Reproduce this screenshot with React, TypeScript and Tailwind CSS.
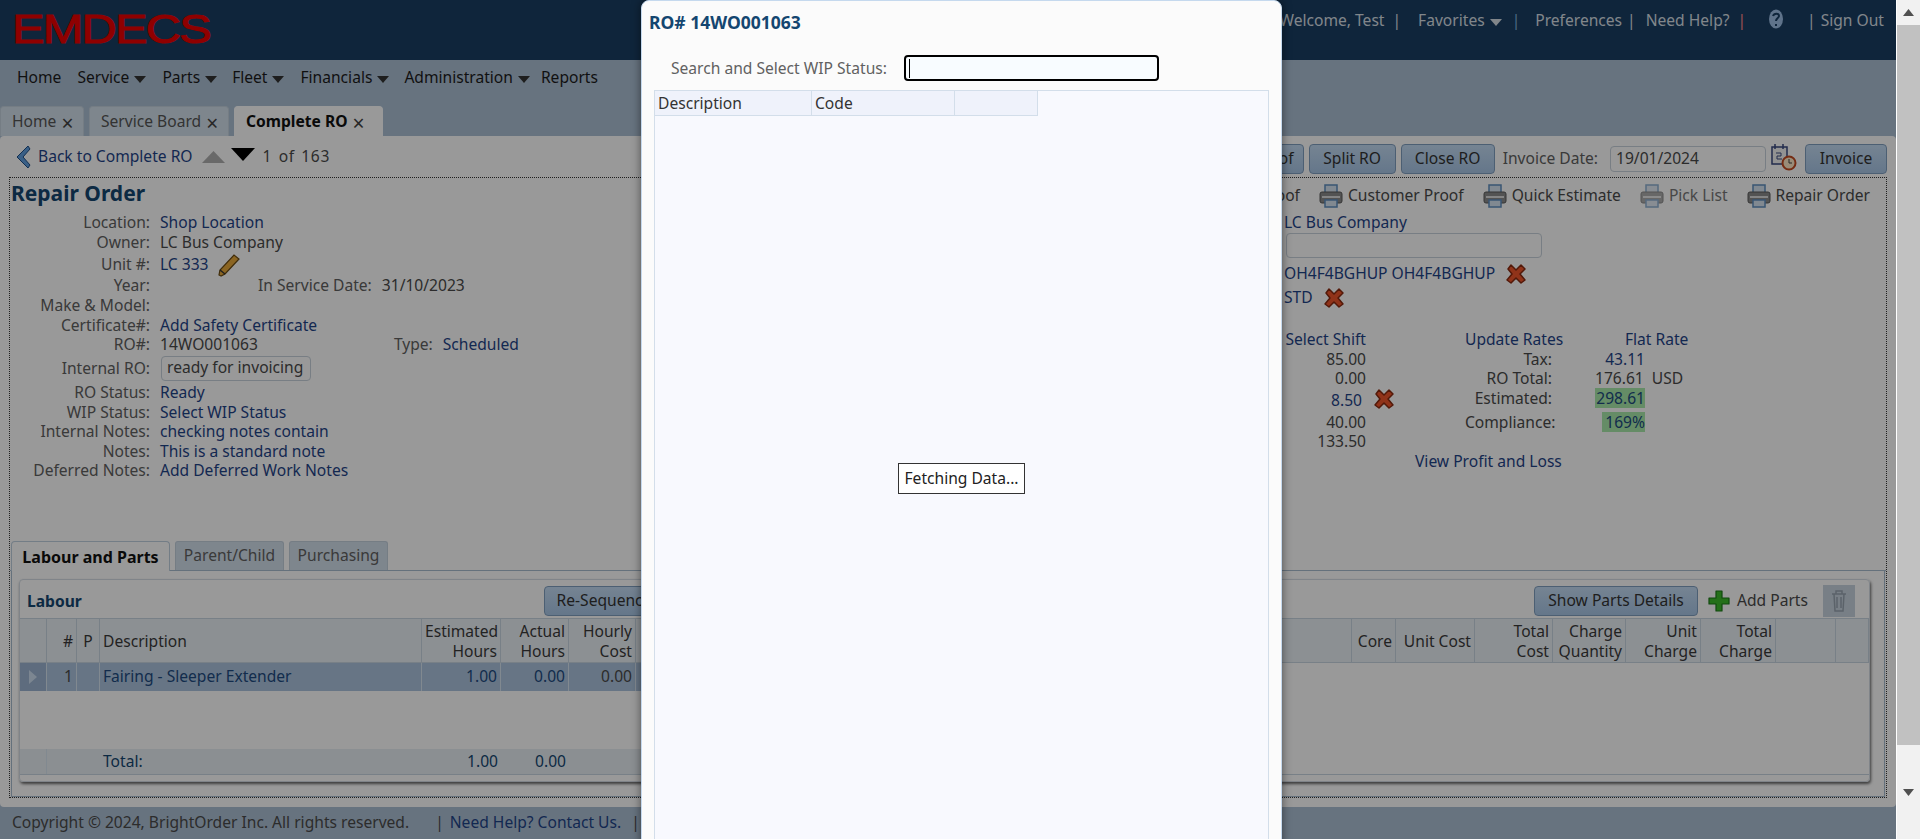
const linkText = "text-[#1f4488]";

function Caret({ className = "fill-[#333333]" }: { className?: string }) {
    return (
        <svg width="12" height="7" viewBox="0 0 12 7" className={`ml-[5px] mt-[3px] ${className}`}>
            <path d="M0 0h12L6 7z" />
        </svg>
    );
}

function RedX() {
    return (
        <svg width="22" height="22" viewBox="0 0 22 22" className="shrink-0">
            <path d="M3 6l3-4 5 5 5-5 4 4-5 5 5 6-4 3-5-5-5 5-4-3 5-6z" fill="#f0552a" stroke="#8a2a10" strokeWidth="1.5" strokeLinejoin="round" />
        </svg>
    );
}

function Printer({ dim = false }: { dim?: boolean }) {
    return (
        <svg width="24" height="24" viewBox="0 0 24 24" className={`shrink-0 ${dim ? "opacity-70" : ""}`}>
            <rect x="6" y="1" width="12" height="8" fill="#d8e4f2" stroke="#5f8fc0" strokeWidth="1.5" />
            <rect x="1" y="8" width="22" height="11" rx="2" fill="#8a8a8a" stroke="#5a5a5a" />
            <rect x="3" y="12" width="18" height="2" fill="#dcdcdc" />
            <rect x="6" y="16" width="12" height="7" fill="#d8e4f2" stroke="#5f8fc0" strokeWidth="1.5" />
        </svg>
    );
}

function Btn({ label, className = "" }: { label: string; className?: string }) {
    return (
        <div className={`h-[30px] flex items-center justify-center rounded-[4px] border border-[#7f9fc0] bg-gradient-to-b from-[#c4dcf4] to-[#a8c6e6] text-[#333333] whitespace-nowrap ${className}`}>
            {label}
        </div>
    );
}

function NavItem({ label, caret = true, className = "" }: { label: string; caret?: boolean; className?: string }) {
    return (
        <div className={`flex items-center ${className}`}>
            <span>{label}</span>
            {caret && <Caret />}
        </div>
    );
}

function PageTab({ label, active = false, className = "" }: { label: string; active?: boolean; className?: string }) {
    return (
        <div className={`flex items-center pl-[11px] rounded-t-[4px] border border-b-0 ${active ? "h-[31px] -mb-[1px] bg-white border-white font-bold text-[#111111]" : "h-[30px] bg-[#d3e0ec] border-[#c3d0dc] text-[#555555]"} ${className}`}>
            <span>{label}</span>
            <span className="ml-[5px] mt-[3px] text-[21px] leading-none font-normal text-[#444444]">×</span>
        </div>
    );
}

interface DetailRow {
    label: string;
    value?: string;
    link?: boolean;
    height: string;
    extra?: React.ReactNode;
}

const rows: DetailRow[] = [
    { label: "Location:", value: "Shop Location", link: true, height: "h-[20px]" },
    { label: "Owner:", value: "LC Bus Company", height: "h-[20px]" },
    {
        label: "Unit #:", value: "LC 333", link: true, height: "h-[23px]",
        extra: (
            <svg width="24" height="24" viewBox="0 0 24 24" className="ml-[8px]">
                <path d="M4 23l-2-1 1-5L17 2l5 4L8 21z" fill="#e8a93a" stroke="#6a4a12" strokeWidth="1.2" />
                <path d="M3 17l5 4" stroke="#333333" strokeWidth="1.5" />
            </svg>
        ),
    },
    {
        label: "Year:", height: "h-[20px]",
        extra: <div className="ml-[98px] flex"><span className="text-[#616161]">In Service Date:</span><span className="ml-[10px] text-[#4a4a4a]">31/10/2023</span></div>,
    },
    { label: "Make & Model:", height: "h-[20px]" },
    { label: "Certificate#:", value: "Add Safety Certificate", link: true, height: "h-[19px]" },
    {
        label: "RO#:", value: "14WO001063", height: "h-[20px]",
        extra: <div className="ml-[136px] flex"><span className="text-[#616161]">Type:</span><span className={`ml-[10px] ${linkText}`}>Scheduled</span></div>,
    },
    {
        label: "Internal RO:", height: "h-[28px]",
        extra: <div className="ml-[1px] -mt-[2px] h-[25px] w-[150px] flex items-center pl-[5px] rounded-[4px] border border-[#c8d2dc] text-[#4a4a4a] whitespace-nowrap">ready for invoicing</div>,
    },
    { label: "RO Status:", value: "Ready", link: true, height: "h-[20px]" },
    { label: "WIP Status:", value: "Select WIP Status", link: true, height: "h-[19px]" },
    { label: "Internal Notes:", value: "checking notes contain", link: true, height: "h-[20px]" },
    { label: "Notes:", value: "This is a standard note", link: true, height: "h-[19px]" },
    { label: "Deferred Notes:", value: "Add Deferred Work Notes", link: true, height: "h-[20px]" },
];

const printItems = [
    { label: "Shop Proof" },
    { label: "Customer Proof" },
    { label: "Quick Estimate" },
    { label: "Pick List", dim: true },
    { label: "Repair Order" },
];

const leftCols = [
    { w: "w-[27px]", top: "", bottom: "", align: "" },
    { w: "w-[30px]", top: "", bottom: "#", align: "text-right" },
    { w: "w-[23px]", top: "", bottom: "P", align: "text-center" },
    { w: "w-[322px]", top: "", bottom: "Description", align: "text-left" },
    { w: "w-[79px]", top: "Estimated", bottom: "Hours", align: "text-right" },
    { w: "w-[68px]", top: "Actual", bottom: "Hours", align: "text-right" },
    { w: "w-[67px]", top: "Hourly", bottom: "Cost", align: "text-right" },
];

const rightCols = [
    { w: "w-[44px]", top: "", bottom: "Core", align: "text-right" },
    { w: "w-[79px]", top: "", bottom: "Unit Cost", align: "text-right" },
    { w: "w-[78px]", top: "Total", bottom: "Cost", align: "text-right" },
    { w: "w-[73px]", top: "Charge", bottom: "Quantity", align: "text-right" },
    { w: "w-[75px]", top: "Unit", bottom: "Charge", align: "text-right" },
    { w: "w-[75px]", top: "Total", bottom: "Charge", align: "text-right" },
    { w: "w-[60px]", top: "", bottom: "", align: "" },
    { w: "w-[33px]", top: "", bottom: "", align: "" },
];

function HeadCell({ col }: { col: { w: string; top: string; bottom: string; align: string } }) {
    return (
        <div className={`${col.w} shrink-0 h-full flex flex-col justify-center px-[3px] border-r border-[#c9d6e2] leading-[20px] text-[#3a3a3a] whitespace-nowrap ${col.align}`}>
            {col.top && <span>{col.top}</span>}
            {col.bottom && <span>{col.bottom}</span>}
        </div>
    );
}

function DataCell({ w, text, className = "" }: { w: string; text?: string; className?: string }) {
    return <div className={`${w} shrink-0 h-full flex items-center px-[3px] border-r border-[#d8e4f0] ${className}`}>{text}</div>;
}

function MainPage() {
    return (
        <div className="w-[1896px] h-[839px] flex flex-col bg-[#acc0d4]">
            <header className="h-[60px] shrink-0 bg-[#1a3f63] flex justify-between">
                <div className="ml-[12px] mt-[7px] h-[44px] w-[172px] font-['Liberation_Sans'] text-[41px] leading-[44px] tracking-[-1.5px] text-[#ee0000] [-webkit-text-stroke:1px_#ee0000] scale-x-[1.19] origin-left whitespace-nowrap">EMDECS</div>
                <div className="flex items-center h-[42px] mr-[12px] text-[#d8dfe6] whitespace-nowrap">
                    <span>Welcome, Test</span>
                    <span className="ml-[8px]">|</span>
                    <span className="ml-[17px] -mt-[1px]">Favorites</span>
                    <Caret className="fill-[#d8dfe6]" />
                    <span className="ml-[10px] text-[#7fb0dc]">|</span>
                    <span className="ml-[15px]">Preferences</span>
                    <span className="ml-[5px]">|</span>
                    <span className="ml-[10px]">Need Help?</span>
                    <span className="ml-[8px] text-[#ff8a8a]">|</span>
                    <svg width="16" height="20" viewBox="0 0 16 20" className="ml-[22px] -mt-[4px]">
                        <ellipse cx="8" cy="10" rx="7" ry="9.500" fill="#9fc0e6" />
                        <path d="M5 7c1-3 6-3 6 0 0 2-3 2-3 5M8 15v2" fill="none" stroke="#1a3f63" strokeWidth="2" />
                    </svg>
                    <span className="ml-[23px]">|</span>
                    <span className="ml-[5px]">Sign Out</span>
                </div>
            </header>

            <nav className="h-[76px] shrink-0 flex flex-col justify-between text-[#1c1c1c]">
                <div className="flex items-center pl-[17px] h-[36px]">
                    <NavItem label="Home" caret={false} />
                    <NavItem label="Service" className="ml-[16px]" />
                    <NavItem label="Parts" className="ml-[16px]" />
                    <NavItem label="Fleet" className="ml-[15px]" />
                    <NavItem label="Financials" className="ml-[16px]" />
                    <NavItem label="Administration" className="ml-[15px]" />
                    <NavItem label="Reports" caret={false} className="ml-[11px]" />
                </div>
                <div className="flex items-end">
                    <PageTab label="Home" className="w-[84px]" />
                    <PageTab label="Service Board" className="w-[140px] ml-[5px]" />
                    <PageTab label="Complete RO" active className="w-[149px] ml-[5px]" />
                </div>
            </nav>

            <main className="h-[671px] shrink-0 bg-white rounded-[4px] pl-[9px] pr-[9px] flex flex-col">
                <div className="h-[41px] shrink-0 flex items-center justify-between">
                    <div className="flex items-center pl-[5px]">
                        <svg width="17" height="26" viewBox="0 0 17 26">
                            <path d="M14 2L3 13l11 11 2-3-7-8 7-8z" fill="#5f9fe0" stroke="#1f4f88" />
                        </svg>
                        <span className={`ml-[7px] ${linkText}`}>Back to Complete RO</span>
                        <svg width="23" height="14" viewBox="0 0 23 14" className="ml-[9px]"><path d="M0 13h23L11.500 1z" fill="#b0b0b0" /></svg>
                        <svg width="24" height="14" viewBox="0 0 24 14" className="ml-[6px] -mt-[3px]"><path d="M0 0h24L12 13z" fill="#000000" /></svg>
                        <span className="ml-[8px] text-[#4a4a4a] tracking-[0.6px] [word-spacing:2px]">1 of 163</span>
                    </div>
                    <div className="flex items-center mt-[5px]">
                        <Btn label="Proof" className="w-[60px]" />
                        <Btn label="Split RO" className="w-[87px] ml-[5px]" />
                        <Btn label="Close RO" className="w-[94px] ml-[5px]" />
                        <span className="ml-[8px] text-[#616161]">Invoice Date:</span>
                        <div className="ml-[12px] w-[156px] h-[26px] flex items-center pl-[5px] rounded-[4px] border border-[#c8d2dc] text-[#4a4a4a]">19/01/2024</div>
                        <svg width="26" height="28" viewBox="0 0 26 28" className="ml-[5px] -mt-[4px]">
                            <rect x="1" y="4" width="15" height="17" fill="#f4f4f4" stroke="#3a4a80" strokeWidth="1.5" />
                            <path d="M4 1v5M12 1v5" stroke="#3a4a80" strokeWidth="1.5" />
                            <path d="M5 10h5v3H6v3h5" fill="none" stroke="#3a4a80" />
                            <circle cx="18" cy="20" r="6.500" fill="#ffe9c8" stroke="#c44a20" strokeWidth="2" />
                            <path d="M18 16v4h3" fill="none" stroke="#444444" />
                        </svg>
                        <Btn label="Invoice" className="w-[82px] ml-[8px]" />
                    </div>
                </div>

                <div className="h-[621px] shrink-0 border border-dotted border-[#333333] flex flex-col">
                    <div className="h-[363px] shrink-0 flex justify-between">
                        <div className="w-[620px]">
                            <h1 className="h-[35px] pb-[3px] pl-[1px] flex items-center text-[21px] font-bold text-[#144670]">Repair Order</h1>
                            {rows.map((row) => (
                                <div key={row.label} className={`${row.height} flex items-center`}>
                                    <span className="w-[140px] shrink-0 text-right text-[#616161]">{row.label}</span>
                                    <span className={`ml-[10px] flex items-center ${row.link ? linkText : "text-[#4a4a4a]"}`}>{row.value}</span>
                                    {row.extra}
                                </div>
                            ))}
                        </div>
                        <div className="w-[602px] flex flex-col">
                            <div className="h-[35px] flex items-center justify-end pr-[16px] text-[#4a4a4a] whitespace-nowrap">
                                {printItems.map((item) => (
                                    <div key={item.label} className="flex items-center ml-[19px]">
                                        <Printer dim={item.dim} />
                                        <span className={`ml-[5px] ${item.dim ? "text-[#777777]" : ""}`}>{item.label}</span>
                                    </div>
                                ))}
                            </div>
                            <div className={`h-[20px] flex items-center ${linkText}`}>LC Bus Company</div>
                            <div className="ml-[2px] w-[256px] h-[25px] rounded-[4px] border border-[#c8d2dc]" />
                            <div className={`mt-[4px] h-[24px] flex items-center ${linkText}`}>OH4F4BGHUP OH4F4BGHUP<span className="ml-[10px]"><RedX /></span></div>
                            <div className={`h-[24px] flex items-center ${linkText}`}>STD<span className="ml-[10px]"><RedX /></span></div>
                            <div className="mt-[19px] flex whitespace-nowrap">
                                <div className="w-[82px] flex flex-col items-end">
                                    <span className={`h-[20px] leading-[20px] ${linkText}`}>Select Shift</span>
                                    <span className="h-[20px] leading-[20px] text-[#4a4a4a]">85.00</span>
                                    <span className="h-[19px] leading-[19px] text-[#4a4a4a]">0.00</span>
                                    <span className={`h-[24px] leading-[24px] relative -left-[4px] ${linkText}`}>8.50<span className="absolute left-[42px] top-[0px]"><RedX /></span></span>
                                    <span className="h-[20px] leading-[20px] text-[#4a4a4a]">40.00</span>
                                    <span className="h-[19px] leading-[19px] text-[#4a4a4a]">133.50</span>
                                </div>
                                <div className="ml-[99px] w-[97px] flex flex-col">
                                    <span className={`h-[20px] leading-[20px] ${linkText}`}>Update Rates</span>
                                    <span className="h-[20px] leading-[20px] text-right pr-[10px] text-[#4a4a4a]">Tax:</span>
                                    <span className="h-[19px] leading-[19px] text-right pr-[10px] text-[#4a4a4a]">RO Total:</span>
                                    <span className="h-[24px] leading-[20px] text-right pr-[10px] text-[#4a4a4a]">Estimated:</span>
                                    <span className="h-[20px] leading-[20px] text-right pr-[10px] text-[#4a4a4a]">Compliance:</span>
                                </div>
                                <div className="ml-[22px] w-[70px] flex flex-col">
                                    <span className={`h-[20px] leading-[20px] ml-[41px] ${linkText}`}>Flat Rate</span>
                                    <span className={`h-[20px] leading-[20px] text-right pr-[9px] ${linkText}`}>43.11</span>
                                    <span className="h-[19px] leading-[19px] text-[#4a4a4a] ml-[11px]">176.61<span className="ml-[8px]">USD</span></span>
                                    <div className="h-[24px] flex"><span className="w-[50px] ml-[11px] h-[20px] leading-[20px] text-right bg-[#a8eaaa] text-[#204a80]">298.61</span></div>
                                    <div className="h-[20px] flex"><span className="w-[43px] ml-[18px] h-[20px] leading-[20px] text-right bg-[#a8eaaa] text-[#204a80]">169%</span></div>
                                </div>
                            </div>
                            <div className={`ml-[131px] h-[20px] leading-[20px] ${linkText}`}>View Profit and Loss</div>
                        </div>
                    </div>

                    <div className="flex items-end h-[30px] shrink-0 pl-[1px] border-b border-[#a8bccf]">
                        <div className="w-[159px] h-[30px] -mb-[1px] flex items-center justify-center rounded-t-[4px] border border-b-0 border-[#c0d0e0] bg-white font-bold text-[16px] text-[#111111]">Labour and Parts</div>
                        <div className="w-[109px] h-[29px] ml-[5px] flex items-center justify-center rounded-t-[3px] border border-b-0 border-[#c3d0dc] bg-[#d3e0ec] text-[#616161]">Parent/Child</div>
                        <div className="w-[99px] h-[29px] ml-[5px] flex items-center justify-center rounded-t-[3px] border border-b-0 border-[#c3d0dc] bg-[#d3e0ec] text-[#616161]">Purchasing</div>
                    </div>

                    <div className="flex-1 ml-[1px] mr-[1px] border border-t-0 border-[#a8bccf] pl-[7px] pr-[14px] pt-[8px]">
                        <div className="h-[203px] rounded-[4px] border border-[#d5dde5] shadow-[1px_2px_3px_rgba(0,0,0,0.6)] flex flex-col">
                            <div className="h-[39px] shrink-0 flex items-center justify-between border-b border-[#c9d6e2] pl-[7px] pr-[14px] pt-[3px]">
                                <div className="flex items-center">
                                    <span className="w-[517px] font-bold text-[#144670] mt-[2px]">Labour</span>
                                    <Btn label="Re-Sequence" className="w-[120px]" />
                                </div>
                                <div className="flex items-center">
                                    <Btn label="Show Parts Details" className="w-[164px]" />
                                    <svg width="22" height="22" viewBox="0 0 22 22" className="ml-[10px]">
                                        <path d="M8 1h6v7h7v6h-7v7H8v-7H1V8h7z" fill="#3dbb2a" stroke="#1c7a18" strokeWidth="1.2" strokeLinejoin="round" />
                                    </svg>
                                    <span className="ml-[7px] w-[70px] whitespace-nowrap text-[#4a4a4a]">Add Parts</span>
                                    <div className="ml-[16px] w-[32px] h-[32px] flex items-center justify-center bg-[#c8d4e0]">
                                        <svg width="16" height="24" viewBox="0 0 16 24" fill="none" stroke="#98a4b0" strokeWidth="1.500">
                                            <path d="M1 5h14M5 5V2h6v3M3 5l1 17h8l1-17M6 8v11M10 8v11" />
                                        </svg>
                                    </div>
                                </div>
                            </div>
                            <div className="flex-1 flex min-h-0">
                                <div className="w-[640px] shrink-0 flex flex-col">
                                    <div className="h-[44px] shrink-0 flex bg-[#eaf0f6] border-b border-[#c9d6e2]">
                                        {leftCols.map((col, i) => <HeadCell key={i} col={col} />)}
                                    </div>
                                    <div className="h-[28px] shrink-0 flex bg-[#acc4de] text-[#204a80]">
                                        <div className="w-[27px] shrink-0 h-full bg-[#9db4d2] border-r border-[#d8e4f0] flex items-center justify-center">
                                            <svg width="10" height="14" viewBox="0 0 10 14"><path d="M1 0l8 7-8 7z" fill="#cfe0f2" /></svg>
                                        </div>
                                        <DataCell w="w-[30px]" text="1" className="justify-end text-[#4a4a4a]" />
                                        <DataCell w="w-[23px]" />
                                        <DataCell w="w-[322px]" text="Fairing - Sleeper Extender" />
                                        <DataCell w="w-[79px]" text="1.00" className="justify-end" />
                                        <DataCell w="w-[68px]" text="0.00" className="justify-end" />
                                        <DataCell w="w-[67px]" text="0.00" className="justify-end text-[#4a4a4a]" />
                                    </div>
                                    <div className="flex-1" />
                                    <div className="h-[26px] shrink-0 flex bg-[#e8eef4] border-b border-[#c9d6e2] text-[#144670]">
                                        <div className="w-[27px] shrink-0 border-r border-[#d8e4f0]" />
                                        <div className="w-[53px] shrink-0" />
                                        <DataCell w="w-[322px]" text="Total:" className="border-r-0" />
                                        <DataCell w="w-[79px]" text="1.00" className="justify-end border-r-0" />
                                        <DataCell w="w-[68px]" text="0.00" className="justify-end border-r-0" />
                                    </div>
                                    <div className="h-[6px] shrink-0" />
                                </div>
                                <div className="flex-1 flex flex-col min-w-0">
                                    <div className="h-[44px] shrink-0 flex bg-[#eaf0f6] border-b border-[#c9d6e2]">
                                        <div className="flex-1 border-r border-[#c9d6e2]" />
                                        {rightCols.map((col, i) => <HeadCell key={i} col={col} />)}
                                    </div>
                                    <div className="flex-1" />
                                    <div className="h-[7px] shrink-0 border-t border-[#c9d6e2]" />
                                </div>
                            </div>
                        </div>
                    </div>
                </div>
            </main>

            <footer className="h-[32px] shrink-0 flex items-center pl-[12px] text-[#4a4a4a]">
                <span>Copyright © 2024, BrightOrder Inc. All rights reserved.</span>
                <span className="ml-[26px]">|</span>
                <span className={`ml-[6px] ${linkText}`}>Need Help? Contact Us.</span>
                <span className="ml-[10px]">|</span>
            </footer>
        </div>
    );
}

function WipModal() {
    return (
        <div className="absolute left-[641px] top-0 w-[641px] h-[860px] rounded-t-[8px] border border-[#c5d9ee] bg-[#fbfbfb] shadow-[0_0_10px_rgba(0,0,0,0.5)] flex flex-col">
            <h2 className="h-[42px] shrink-0 pl-[7px] flex items-center font-bold text-[17.5px] text-[#144670]">RO# 14WO001063</h2>
            <div className="mt-[7px] h-[36px] shrink-0 flex items-center pl-[29px]">
                <span className="w-[222px] mt-[2px] whitespace-nowrap text-[#616161]">Search and Select WIP Status:</span>
                <div className="ml-[11px] w-[255px] h-[26px] rounded-[4px] border-2 border-black bg-[#f8fcff] flex items-center pl-[3px]">
                    <div className="w-[1px] h-[19px] bg-black" />
                </div>
            </div>
            <div className="relative mt-[4px] ml-[12px] w-[615px] flex-1 border border-[#d3deea] bg-[#f8f9fe]">
                <div className="w-[383px] h-[25px] flex border-b border-r border-[#d3deea] bg-[#eff2fb] text-[#333333]">
                    <div className="w-[157px] flex items-center pl-[3px] pt-[1px] border-r border-[#d3deea]">Description</div>
                    <div className="w-[143px] flex items-center pl-[3px] pt-[1px] border-r border-[#d3deea]">Code</div>
                </div>
                <div className="absolute left-[243px] top-[372px] w-[127px] h-[31px] flex items-center justify-center bg-white border border-[#333333] text-[#222222] whitespace-nowrap">Fetching Data...</div>
            </div>
        </div>
    );
}

export default function App() {
    return (
        <div className="relative flex h-[839px] w-[1920px] overflow-hidden bg-white font-['Noto_Sans',sans-serif] text-[15.6px]">
            <MainPage />
            <div className="absolute left-0 top-0 w-[1896px] h-[839px] bg-black/40" />
            <WipModal />
            <div className="relative ml-auto w-[23px] h-[839px] bg-[#f1f1f1] flex flex-col items-center">
                <div className="h-[25px] w-full flex items-center justify-center">
                    <svg width="11" height="7" viewBox="0 0 11 7"><path d="M0 7h11L5.500 0z" fill="#505050" /></svg>
                </div>
                <div className="h-[720px] w-full bg-[#c1c1c1]" />
                <div className="flex-1 w-full flex items-center justify-center">
                    <svg width="11" height="7" viewBox="0 0 11 7"><path d="M0 0h11L5.500 7z" fill="#505050" /></svg>
                </div>
            </div>
        </div>
    );
}
